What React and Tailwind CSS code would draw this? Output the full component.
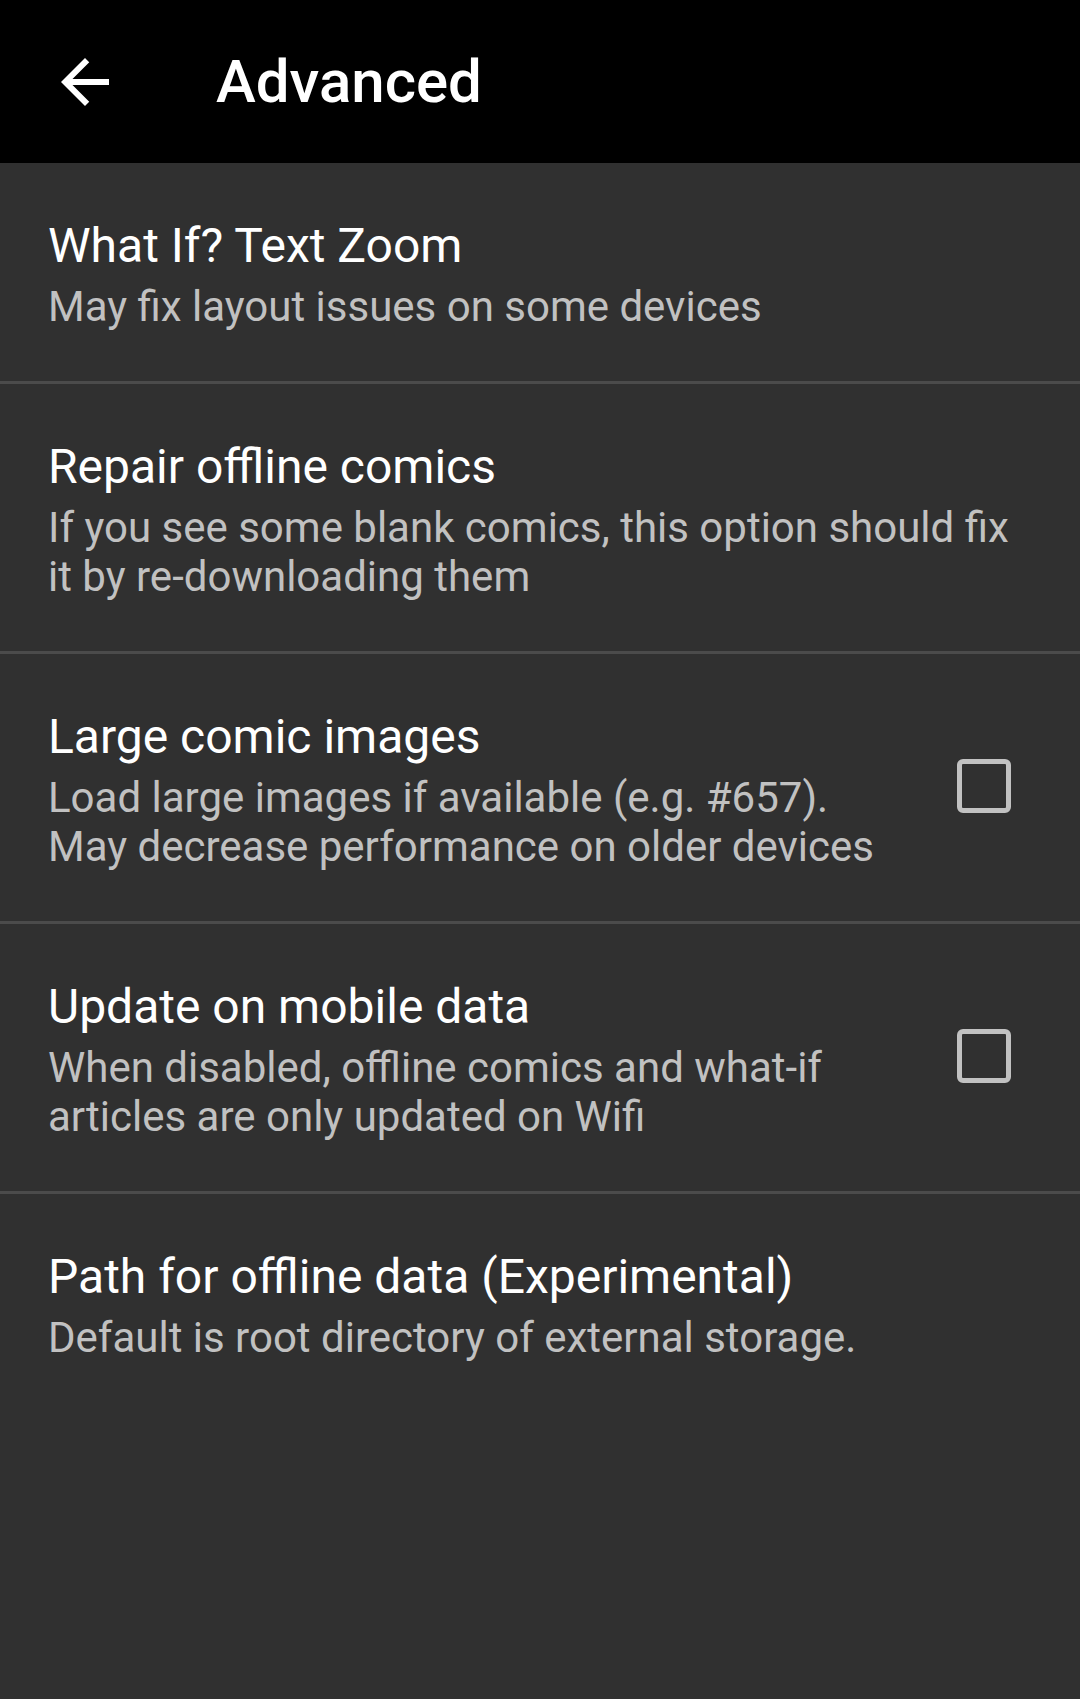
const prefs = [
  { title: 'What If? Text Zoom', summary: ['May fix layout issues on some devices'] },
  {
    title: 'Repair offline comics',
    summary: ['If you see some blank comics, this option should fix', 'it by re-downloading them'],
  },
  {
    title: 'Large comic images',
    summary: ['Load large images if available (e.g. #657).', 'May decrease performance on older devices'],
    checkbox: true,
  },
  {
    title: 'Update on mobile data',
    summary: ['When disabled, offline comics and what-if', 'articles are only updated on Wifi'],
    checkbox: true,
  },
  { title: 'Path for offline data (Experimental)', summary: ['Default is root directory of external storage.'], last: true },
];

function PrefRow({ title, summary, checkbox, last }) {
  return (
    <div className={last ? '' : 'border-b-[3px] border-[#4b4b4b]'}>
      <div className="flex items-center pl-[48px] pr-[69px] pt-[55px] pb-[50px]">
        <div className="flex-1">
          <div className="text-[48px] leading-[56px] text-white">{title}</div>
          <div className="mt-[8px] text-[42px] leading-[49px] text-[#c1c1c1]">
            {summary.map((line) => (
              <div key={line}>{line}</div>
            ))}
          </div>
        </div>
        {checkbox && (
          <div className="w-[54px] h-[54px] mb-[8px] rounded-[6px] border-[5px] border-[#c1c1c1] shrink-0" />
        )}
      </div>
    </div>
  );
}

export default function App() {
  return (
    <div className="w-[1080px] h-[1699px] bg-[#303030] font-['Roboto',sans-serif] overflow-hidden">
      <div className="h-[163px] bg-black flex items-center">
        <svg viewBox="0 0 24 24" className="w-[72px] h-[72px] ml-[49px] fill-white">
          <path d="M20 11H7.83l5.59-5.59L12 4l-8 8 8 8 1.41-1.41L7.83 13H20v-2z" />
        </svg>
        <span className="ml-[95px] text-[60px] font-medium text-white">Advanced</span>
      </div>
      {prefs.map((p) => (
        <PrefRow key={p.title} {...p} />
      ))}
    </div>
  );
}
